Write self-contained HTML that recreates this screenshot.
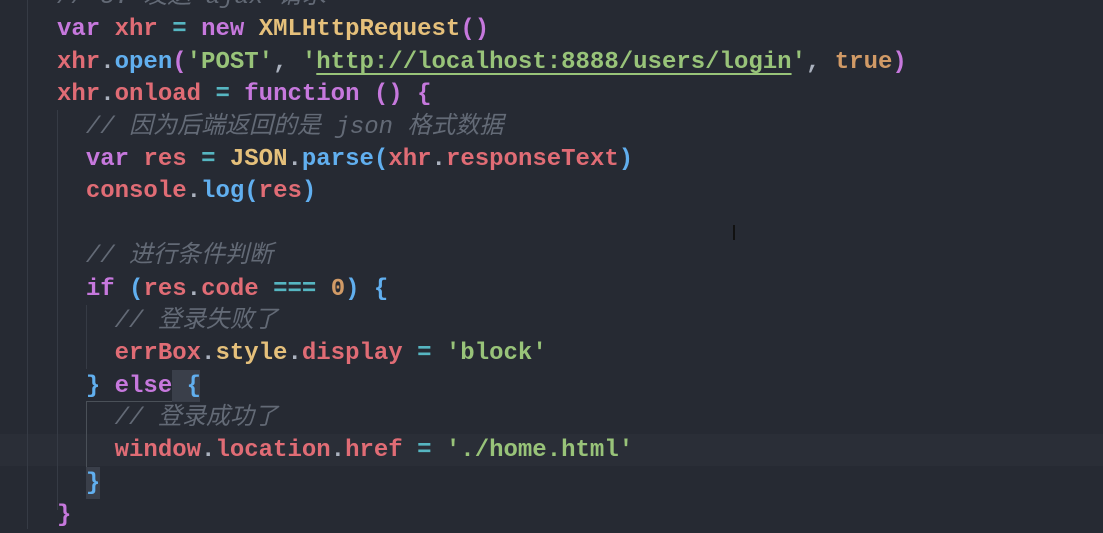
<!DOCTYPE html>
<html><head><meta charset="utf-8"><style>
html,body{margin:0;padding:0;width:1103px;height:529px;overflow:hidden;background:#262a33;}
.code{position:absolute;left:57px;top:-18px;font-family:"Liberation Mono","Noto Sans CJK SC",monospace;font-size:24px;font-weight:bold;line-height:32.4px;color:#abb2bf;}
.l{height:32.4px;white-space:pre;}
.k{color:#c678dd}.v{color:#e06c75}.f{color:#61afef}.s{color:#98c379}.c{color:#636a76;font-style:italic;font-weight:normal}
.y{color:#e5c07b}.o{color:#56b6c2}.n{color:#d19a66}.p{color:#abb2bf}.pk{color:#c678dd}.b{color:#61afef}
.u{text-decoration:underline;text-decoration-thickness:2px;text-underline-offset:5px}
.g{position:absolute;width:1px;background:#363b45;}
.hl{position:absolute;left:0;width:1103px;top:434px;height:32px;background:#2a2e37;}
</style></head><body>
<div class="hl"></div>
<div class="g" style="left:27px;top:0;height:529px"></div>
<div class="g" style="left:57px;top:110px;height:400px"></div>
<div class="g" style="left:86px;top:305px;height:64px"></div>
<div style="position:absolute;left:86px;top:401px;width:1px;height:88px;background:#4a5058"></div>
<div style="position:absolute;left:86px;top:401px;width:96px;height:1px;background:#4a5058"></div>
<div style="position:absolute;left:172px;top:370px;width:28px;height:32px;background:#3a3f4a"></div>
<div style="position:absolute;left:86px;top:467px;width:14px;height:32px;background:#3a3f4a"></div>
<div style="position:absolute;left:733px;top:225px;width:2px;height:15px;background:#111"></div>
<div class="code"><div class="l"><span class="c">// 3. 发送 ajax 请求</span></div><div class="l"><span class="k">var</span> <span class="v">xhr</span> <span class="o">=</span> <span class="k">new</span> <span class="y">XMLHttpRequest</span><span class="pk">()</span></div><div class="l"><span class="v">xhr</span>.<span class="f">open</span><span class="pk">(</span><span class="s">'POST'</span>, <span class="s">'<span class="u">http://localhost:8888/users/login</span>'</span>, <span class="n">true</span><span class="pk">)</span></div><div class="l"><span class="v">xhr</span>.<span class="v">onload</span> <span class="o">=</span> <span class="k">function</span> <span class="pk">()</span> <span class="pk">{</span></div><div class="l">  <span class="c">// 因为后端返回的是 json 格式数据</span></div><div class="l">  <span class="k">var</span> <span class="v">res</span> <span class="o">=</span> <span class="y">JSON</span>.<span class="f">parse</span><span class="b">(</span><span class="v">xhr</span>.<span class="v">responseText</span><span class="b">)</span></div><div class="l">  <span class="v">console</span>.<span class="f">log</span><span class="b">(</span><span class="v">res</span><span class="b">)</span></div><div class="l"> </div><div class="l">  <span class="c">// 进行条件判断</span></div><div class="l">  <span class="k">if</span> <span class="b">(</span><span class="v">res</span>.<span class="v">code</span> <span class="o">===</span> <span class="n">0</span><span class="b">)</span> <span class="b">{</span></div><div class="l">    <span class="c">// 登录失败了</span></div><div class="l">    <span class="v">errBox</span>.<span class="y">style</span>.<span class="v">display</span> <span class="o">=</span> <span class="s">'block'</span></div><div class="l">  <span class="b">}</span> <span class="k">else</span> <span class="b">{</span></div><div class="l">    <span class="c">// 登录成功了</span></div><div class="l">    <span class="v">window</span>.<span class="v">location</span>.<span class="v">href</span> <span class="o">=</span> <span class="s">'./home.html'</span></div><div class="l">  <span class="b">}</span></div><div class="l"><span class="pk">}</span></div></div>
</body></html>
